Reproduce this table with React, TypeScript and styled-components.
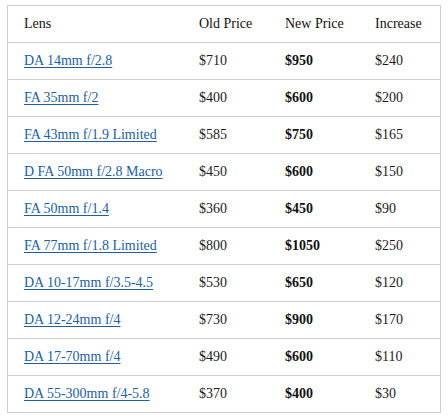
import React from "react";
import styled, { createGlobalStyle } from "styled-components";

const Global = createGlobalStyle`
  html, body { margin: 0; padding: 0; background: #fff; }
  body { font-family: "Liberation Serif", "Times New Roman", serif; }
`;

const Wrap = styled.div`
  padding: 5px 7px;
`;

const Table = styled.table`
  border-collapse: collapse;
  border: 1px solid #cfcfcf;
  width: 434px;
  table-layout: fixed;
  font-size: 14px;
  color: #1c1c1c;
  font-variant-numeric: oldstyle-nums;
`;

const Th = styled.th<{ $w: number }>`
  width: ${(p) => p.$w}px;
  text-align: left;
  font-weight: normal;
  color: #111;
  padding: 8px 0 8px 16px;
  height: 20px;
  line-height: 20px;
  box-sizing: content-box;
  border-bottom: 1px solid #cfcfcf;
`;

const Td = styled.td<{ $bold?: boolean }>`
  padding: 8px 0 8px 16px;
  height: 20px;
  line-height: 20px;
  white-space: nowrap;
  border-bottom: 1px solid #cfcfcf;
  font-weight: ${(p) => (p.$bold ? 700 : 400)};
  color: ${(p) => (p.$bold ? "#111" : "#1c1c1c")};
`;

const Link = styled.a`
  color: #215e9f;
  text-decoration: underline;
  text-decoration-thickness: 1px;
  text-underline-offset: 2px;
`;

const rows: [string, string, string, string][] = [
  ["DA 14mm f/2.8", "$710", "$950", "$240"],
  ["FA 35mm f/2", "$400", "$600", "$200"],
  ["FA 43mm f/1.9 Limited", "$585", "$750", "$165"],
  ["D FA 50mm f/2.8 Macro", "$450", "$600", "$150"],
  ["FA 50mm f/1.4", "$360", "$450", "$90"],
  ["FA 77mm f/1.8 Limited", "$800", "$1050", "$250"],
  ["DA 10-17mm f/3.5-4.5", "$530", "$650", "$120"],
  ["DA 12-24mm f/4", "$730", "$900", "$170"],
  ["DA 17-70mm f/4", "$490", "$600", "$110"],
  ["DA 55-300mm f/4-5.8", "$370", "$400", "$30"],
];

export default function App() {
  return (
    <>
      <Global />
      <Wrap>
        <Table>
          <thead>
            <tr>
              <Th $w={159}>Lens</Th>
              <Th $w={70}>Old Price</Th>
              <Th $w={74}>New Price</Th>
              <Th $w={65}>Increase</Th>
            </tr>
          </thead>
          <tbody>
            {rows.map((r) => (
              <tr key={r[0]}>
                <Td>
                  <Link href="#">{r[0]}</Link>
                </Td>
                <Td>{r[1]}</Td>
                <Td $bold>{r[2]}</Td>
                <Td>{r[3]}</Td>
              </tr>
            ))}
          </tbody>
        </Table>
      </Wrap>
    </>
  );
}
